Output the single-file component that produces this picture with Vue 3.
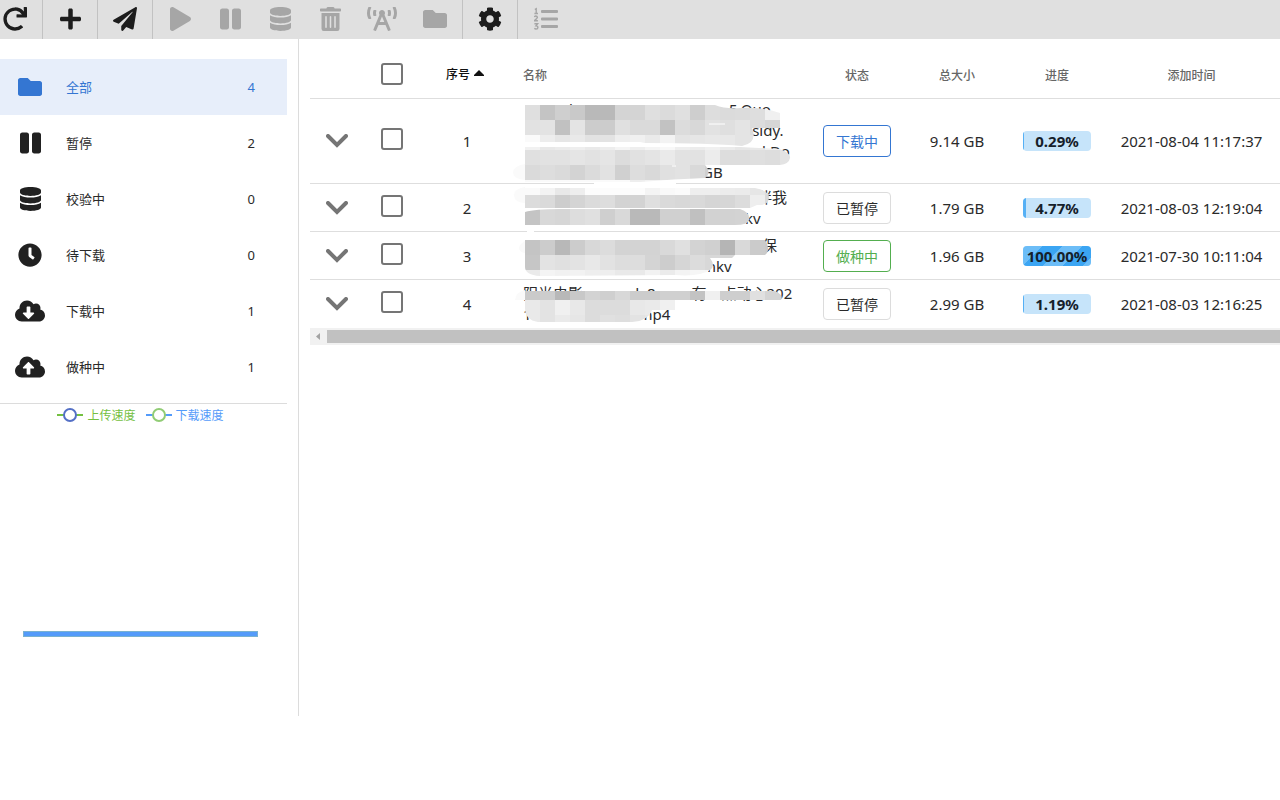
<script setup>
import { ref } from 'vue'

const icons = {
  redo: [512, 'M500.33 0h-47.41a12 12 0 0 0-12 12.57l4 82.76A247.42 247.42 0 0 0 256 8C119.34 8 7.9 119.53 8 256.19 8.1 393.07 119.1 504 256 504a247.1 247.1 0 0 0 166.18-63.91 12 12 0 0 0 .48-17.43l-34-34a12 12 0 0 0-16.38-.55A176 176 0 1 1 402.1 157.8l-101.53-4.87a12 12 0 0 0-12.57 12v47.41a12 12 0 0 0 12 12h200.33a12 12 0 0 0 12-12V12a12 12 0 0 0-12-12z'],
  plus: [448, 'M416 208H272V64c0-17.67-14.33-32-32-32h-32c-17.67 0-32 14.33-32 32v144H32c-17.67 0-32 14.33-32 32v32c0 17.67 14.33 32 32 32h144v144c0 17.67 14.33 32 32 32h32c17.67 0 32-14.33 32-32V304h144c17.67 0 32-14.33 32-32v-32c0-17.67-14.33-32-32-32z'],
  plane: [512, 'M476 3.2L12.5 270.6c-18.1 10.4-15.8 35.6 2.2 43.2L121 358.4l287.3-253.2c5.5-4.9 13.3 2.6 8.6 8.3L176 407v80.5c0 23.6 28.5 32.9 42.5 15.8L282 426l124.6 52.2c14.2 6 30.4-2.9 33-18.2l72-432C515 7.8 493.3-6.8 476 3.2z'],
  play: [448, 'M424.4 214.7L72.4 6.6C43.8-10.3 0 6.1 0 47.9V464c0 37.5 40.7 60.1 72.4 41.3l352-208c31.4-18.5 31.5-64.1 0-82.6z'],
  pause: [448, 'M144 479H48c-26.5 0-48-21.5-48-48V79c0-26.5 21.5-48 48-48h96c26.5 0 48 21.5 48 48v352c0 26.5-21.5 48-48 48zm304-48V79c0-26.5-21.5-48-48-48h-96c-26.5 0-48 21.5-48 48v352c0 26.5 21.5 48 48 48h96c26.5 0 48-21.5 48-48z'],
  database: [448, 'M448 73.143v45.714C448 159.143 347.667 192 224 192S0 159.143 0 118.857V73.143C0 32.857 100.333 0 224 0s224 32.857 224 73.143zM448 176v102.857C448 319.143 347.667 352 224 352S0 319.143 0 278.857V176c48.125 33.143 136.208 48.572 224 48.572S399.874 209.143 448 176zm0 160v102.857C448 479.143 347.667 512 224 512S0 479.143 0 438.857V336c48.125 33.143 136.208 48.572 224 48.572S399.874 369.143 448 336z'],
  trash: [448, 'M32 464a48 48 0 0 0 48 48h288a48 48 0 0 0 48-48V128H32zm272-256a16 16 0 0 1 32 0v224a16 16 0 0 1-32 0zm-96 0a16 16 0 0 1 32 0v224a16 16 0 0 1-32 0zm-96 0a16 16 0 0 1 32 0v224a16 16 0 0 1-32 0zM432 32H312l-9.4-18.7A24 24 0 0 0 281.1 0H166.8a23.72 23.72 0 0 0-21.4 13.3L136 32H16A16 16 0 0 0 0 48v32a16 16 0 0 0 16 16h416a16 16 0 0 0 16-16V48a16 16 0 0 0-16-16z'],
  tower: [640, 'M150.94 192h33.73c11.01 0 18.61-10.83 14.86-21.18-4.93-13.58-7.55-27.98-7.55-42.82s2.62-29.24 7.55-42.82C203.29 74.83 195.68 64 184.67 64h-33.73c-7.01 0-13.46 4.49-15.41 11.23C130.64 92.21 128 109.88 128 128c0 18.12 2.64 35.79 7.54 52.76 1.94 6.74 8.39 11.24 15.4 11.24zM89.92 23.34C95.56 12.72 87.97 0 75.96 0H40.63c-6.27 0-12.14 3.59-14.74 9.31C9.4 45.54 0 85.65 0 128c0 24.75 3.12 68.33 26.69 118.86 2.62 5.63 8.42 9.14 14.61 9.14h34.84c12.02 0 19.61-12.74 13.95-23.37-49.78-93.32-16.71-178.15-.17-209.29zM614.06 9.29C611.46 3.58 605.6 0 599.33 0h-35.42c-11.98 0-19.66 12.66-14.02 23.25 18.27 34.29 48.42 119.42.28 209.23-5.72 10.68 1.8 23.52 13.91 23.52h35.23c6.27 0 12.13-3.58 14.73-9.29C630.57 210.48 640 170.36 640 128s-9.42-82.48-25.94-118.71zM489.06 64h-33.73c-11.01 0-18.61 10.83-14.86 21.18 4.93 13.58 7.55 27.98 7.55 42.82s-2.62 29.24-7.55 42.82c-3.76 10.35 3.85 21.18 14.86 21.18h33.73c7.02 0 13.46-4.49 15.41-11.24 4.9-16.97 7.53-34.64 7.53-52.76 0-18.12-2.64-35.79-7.54-52.76-1.94-6.75-8.39-11.24-15.4-11.24zm-116.3 100.12c7.05-10.29 11.2-22.71 11.2-36.12 0-35.35-28.63-64-63.96-64-35.32 0-63.96 28.65-63.96 64 0 13.41 4.15 25.83 11.2 36.12l-130.5 313.41c-3.4 8.15.46 17.52 8.61 20.92l29.51 12.31c8.15 3.4 17.52-.46 20.91-8.61L244.96 384h150.07l49.2 118.15c3.4 8.16 12.76 12.01 20.91 8.61l29.51-12.31c8.15-3.4 12-12.77 8.61-20.92l-130.5-313.41zM271.62 320L320 203.81 368.38 320h-96.76z'],
  folder: [512, 'M464 128H272l-64-64H48C21.49 64 0 85.49 0 112v288c0 26.51 21.49 48 48 48h416c26.51 0 48-21.49 48-48V176c0-26.51-21.49-48-48-48z'],
  cog: [512, 'M487.4 315.7l-42.6-24.6c4.3-23.2 4.3-47 0-70.2l42.6-24.6c4.9-2.8 7.1-8.6 5.5-14-11.1-35.6-30-67.8-54.7-94.6-3.8-4.1-10-5.1-14.8-2.3L380.8 110c-17.9-15.4-38.5-27.3-60.8-35.1V25.8c0-5.6-3.9-10.5-9.4-11.7-36.7-8.2-74.3-7.8-109.2 0-5.5 1.2-9.4 6.1-9.4 11.7V75c-22.2 7.9-42.8 19.8-60.8 35.1L88.7 85.5c-4.9-2.8-11-1.9-14.8 2.3-24.7 26.7-43.6 58.9-54.7 94.6-1.7 5.4.6 11.2 5.5 14L67.3 221c-4.3 23.2-4.3 47 0 70.2l-42.6 24.6c-4.9 2.8-7.1 8.6-5.5 14 11.1 35.6 30 67.8 54.7 94.6 3.8 4.1 10 5.1 14.8 2.3l42.6-24.6c17.9 15.4 38.5 27.3 60.8 35.1v49.2c0 5.6 3.9 10.5 9.4 11.7 36.7 8.2 74.3 7.8 109.2 0 5.5-1.2 9.4-6.1 9.4-11.7v-49.2c22.2-7.9 42.8-19.8 60.8-35.1l42.6 24.6c4.9 2.8 11 1.9 14.8-2.3 24.7-26.7 43.6-58.9 54.7-94.6 1.5-5.5-.7-11.3-5.6-14.1zM256 336c-44.1 0-80-35.9-80-80s35.9-80 80-80 80 35.9 80 80-35.9 80-80 80z'],
  clock: [512, 'M256,8C119,8,8,119,8,256S119,504,256,504,504,393,504,256,393,8,256,8Zm92.49,313h0l-20,25a16,16,0,0,1-22.49,2.5h0l-67-49.72a40,40,0,0,1-15-31.23V112a16,16,0,0,1,16-16h32a16,16,0,0,1,16,16V256l58,42.5A16,16,0,0,1,348.49,321Z'],
  down: [640, 'M537.6 226.6c4.1-10.7 6.4-22.4 6.4-34.6 0-53-43-96-96-96-19.7 0-38.1 6-53.3 16.2C367 64.2 315.3 32 256 32c-88.4 0-160 71.6-160 160 0 2.7.1 5.4.2 8.1C40.2 219.8 0 273.2 0 336c0 79.5 64.5 144 144 144h368c70.7 0 128-57.3 128-128 0-61.9-44-113.6-102.4-125.4zm-132.9 88.7L299.3 420.7c-6.2 6.2-16.4 6.2-22.6 0L171.3 315.3c-10.1-10.1-2.9-27.3 11.3-27.3H248V176c0-8.8 7.2-16 16-16h48c8.8 0 16 7.2 16 16v112h65.4c14.2 0 21.4 17.2 11.3 27.3z'],
  up: [640, 'M537.6 226.6c4.1-10.7 6.4-22.4 6.4-34.6 0-53-43-96-96-96-19.7 0-38.1 6-53.3 16.2C367 64.2 315.3 32 256 32c-88.4 0-160 71.6-160 160 0 2.7.1 5.4.2 8.1C40.2 219.8 0 273.2 0 336c0 79.5 64.5 144 144 144h368c70.7 0 128-57.3 128-128 0-61.9-44-113.6-102.4-125.4zM393.4 288H328v112c0 8.8-7.2 16-16 16h-48c-8.8 0-16-7.2-16-16V288h-65.4c-14.3 0-21.4-17.2-11.3-27.3l105.4-105.4c6.2-6.2 16.4-6.2 22.6 0l105.4 105.4c10.1 10.1 2.9 27.3-11.3 27.3z'],
}

const actions = [
  ['play', '开始'], ['pause', '暂停'], ['database', '校验'],
  ['trash', '删除'], ['tower', '汇报'], ['folder', '目录'],
]

const active = ref('全部')
const filters = [
  { name: '全部', count: 4, icon: 'folder' },
  { name: '暂停', count: 2, icon: 'pause' },
  { name: '校验中', count: 0, icon: 'database' },
  { name: '待下载', count: 0, icon: 'clock' },
  { name: '下载中', count: 1, icon: 'down' },
  { name: '做种中', count: 1, icon: 'up' },
]

// Each name line is a list of [gap before, text] pieces left readable around the mosaic.
const rows = [
  { id: 1, status: '下载中', kind: 'blue', size: '9.14 GB', pct: 0.29, time: '2021-08-04 11:17:37',
    lines: [[[46, 'l'], [156, '5.Quo']], [[222, 'ssidy.']], [[239, 'l.Do']], [[179, 'GB']]] },
  { id: 2, status: '已暂停', kind: 'plain', size: '1.79 GB', pct: 4.77, time: '2021-08-03 12:19:04',
    lines: [[[234, '伴我']], [[208, 'mkv']]] },
  { id: 3, status: '做种中', kind: 'green', size: '1.96 GB', pct: 100, time: '2021-07-30 10:11:04',
    lines: [[[239, '保']], [[179, 'mkv']]] },
  { id: 4, status: '已暂停', kind: 'plain', size: '2.99 GB', pct: 1.19, time: '2021-08-03 12:16:25',
    lines: [[[0, '阳光电影'], [47, 'dy8'], [36, '有一点动'], [0, '心'], [0, '202']], [[0, '1'], [107, 'mp4']]] },
]

// Grey blocks, 15px wide, starting at x = 15 of the overlay.
const strips = [
  { clip: 'M15 10H205Q215 14 230 13Q255 12 270 18V33H242Q248 48 232 51Q200 48 135 48L130 47H15Z',
    bands: [
      [10, 15, 'df c4 cf c9 b9 b9 d4 d4 df db e0 ce dd db dc de f0'],
      [25, 15, 'e2 e3 c1 e4 cc cc e0 da da c2 dc d8 e2 df e4 dc d6'],
      [40, 11, 'fa ed e6 e9 e2 e3 ee f0 ea f3 e4 e6 e8 e8 e4 e4'],
    ] },
  { clip: 'M15 52H230L270 54Q281 58 280 63Q279 69 270 70H195Q202 78 195 83Q165 84 130 87H15Z',
    bands: [
      [52, 3, 'f1 e8 eb ee e9 ed f4 ee f4 f8 ee ec f0 eb e6 e8 ef f2'],
      [55, 15, 'e0 e2 e2 e5 e2 e5 dc e1 e4 ea e2 e2 ec dd dd df dd e3'],
      [70, 15, 'da dd da d3 db e2 d0 dd d9 e0 e2 d9 cf'],
      [85, 2, 'fa fa fa fa fa fa fa ee f2 f2 fa fa'],
    ] },
  { clip: 'M15 93H245Q260 96 259 103Q258 111 247 110L240 113H15ZM15 117Q25 114 50 114H230Q241 118 239 125Q238 130 225 130H15Z',
    bands: [
      [93, 7, 'fa f3 e8 ee fc fc fc fc f4 f9 fb ee ee ec eb e6 dd'],
      [100, 13, 'dc da cd d4 db dd d3 d3 df da d8 d9 d5 d6 dc ee d9'],
      [114, 16, 'c4 d8 d6 dd e0 cf d9 b9 b9 d0 d0 c0 d2 d2 d3'],
    ] },
  { clip: 'M15 145H255Q260 152 257 158L255 160H225L222 163H200Q206 171 200 175Q190 182 165 180L30 181Q15 180 15 172Z',
    bands: [
      [145, 15, 'c4 cc b8 cc d8 dc d3 d3 d3 d9 e0 d3 d0 b5 d9 cb c9'],
      [160, 15, 'c6 e3 e0 e3 e8 e2 dd dd d4 cd d6 dc d8 d6'],
      [175, 7, 'ea f4 f1 f2 ee ee e9 e9 f2 eb f3 f6 f5'],
    ] },
  { clip: 'M15 196H265Q274 200 271 205H165V215H142Q138 226 122 227H28Q15 225 15 213Z',
    bands: [
      [196, 9, 'ca cd b8 c8 d3 cf d8 cc cc d0 d0 c3 f0 ce ce e0 d4 d4'],
      [205, 15, 'e9 e3 f0 e8 dc dc dc e8 ea f0'],
      [220, 7, 'e9 e3 ea e6 dc e0 de e3 e5'],
    ] },
].map((s) => ({
  clip: s.clip,
  cells: s.bands.flatMap(([y, h, tones]) =>
    tones.split(' ').map((t, i) => ({ x: 15 + i * 15, y, h, fill: '#' + t.repeat(3) }))),
}))
</script>

<template>
  <div class="app">
    <header class="toolbar">
      <button class="tool first" aria-label="刷新"><svg class="icon" :viewBox="`0 0 ${icons.redo[0]} 512`"><path :d="icons.redo[1]" /></svg></button>
      <button class="tool" aria-label="添加"><svg class="icon" :viewBox="`0 0 ${icons.plus[0]} 512`"><path :d="icons.plus[1]" /></svg></button>
      <button class="tool" aria-label="发送"><svg class="icon" :viewBox="`0 0 ${icons.plane[0]} 512`"><path :d="icons.plane[1]" /></svg></button>
      <div class="group">
        <button v-for="[name, label] in actions" :key="name" class="action" :class="name" :aria-label="label" disabled>
          <svg class="icon" :viewBox="`0 0 ${icons[name][0]} 512`"><path :d="icons[name][1]" /></svg>
        </button>
      </div>
      <button class="tool" aria-label="设置"><svg class="icon" :viewBox="`0 0 ${icons.cog[0]} 512`"><path :d="icons.cog[1]" /></svg></button>
      <button class="tool last" aria-label="列表" disabled>
        <svg class="icon" viewBox="0 0 24 24">
          <path d="M8 3h15q1 0 1 1v1q0 1-1 1H8q-1 0-1-1V4q0-1 1-1zM8 10.500h15q1 0 1 1v1q0 1-1 1H8q-1 0-1-1v-1q0-1 1-1zM8 18h15q1 0 1 1v1q0 1-1 1H8q-1 0-1-1v-1q0-1 1-1z" />
          <path class="digits" d="M.8 2.500l1.400-.8v4.600M.4 6.500h3.600M.4 10q.3-1 1.500-1t1.500 1.200q0 .8-3 3.500h3.500M.4 16.800h3.200l-1.600 2q1.900 0 1.900 1.600t-1.900 1.600q-1 0-1.700-.6" />
        </svg>
      </button>
    </header>

    <div class="body">
      <aside class="side">
        <nav class="filters">
          <button v-for="f in filters" :key="f.name" class="filter" :class="{ on: f.name === active }" @click="active = f.name">
            <span class="pic"><svg class="icon" :viewBox="`0 0 ${icons[f.icon][0]} 512`"><path :d="icons[f.icon][1]" /></svg></span>
            <span class="label">{{ f.name }}</span>
            <span class="count">{{ f.count }}</span>
          </button>
        </nav>
        <div class="legend">
          <span class="key up">
            <svg width="26" height="14" viewBox="0 0 26 14"><path d="M0 7H26" stroke="#74c041" stroke-width="2" /><circle cx="13" cy="7" r="6" fill="#fff" stroke="#5470c6" stroke-width="2" /></svg>上传速度
          </span>
          <span class="key down">
            <svg width="26" height="14" viewBox="0 0 26 14"><path d="M0 7H26" stroke="#549bfa" stroke-width="2" /><circle cx="13" cy="7" r="6" fill="#fff" stroke="#91cc75" stroke-width="2" /></svg>下载速度
          </span>
        </div>
        <div class="chart"><div class="series"></div></div>
      </aside>

      <main class="main">
        <div class="sheet">
          <table>
            <colgroup><col class="c-exp"><col class="c-chk"><col class="c-no"><col class="c-name"><col class="c-mid"><col class="c-mid"><col class="c-mid"><col></colgroup>
            <thead>
              <tr>
                <th></th>
                <th class="chk"><input type="checkbox" aria-label="全选"></th>
                <th class="sorted">序号<svg width="10" height="6" viewBox="0 0 10 6"><path d="M5 0L10 5V6H0V5Z" fill="#111" /></svg></th>
                <th class="name">名称</th>
                <th>状态</th>
                <th>总大小</th>
                <th>进度</th>
                <th class="time">添加时间</th>
              </tr>
            </thead>
            <tbody>
              <tr v-for="r in rows" :key="r.id">
                <td><button class="expand" aria-label="展开"><svg width="22" height="14" viewBox="0 0 22 14"><path d="M2 2L11 11L20 2" /></svg></button></td>
                <td class="chk"><input type="checkbox" :aria-label="`选择 ${r.id}`"></td>
                <td>{{ r.id }}</td>
                <td class="name">
                  <div v-for="(line, i) in r.lines" :key="i" class="line">
                    <span v-for="(seg, j) in line" :key="j" :style="{ marginLeft: seg[0] + 'px' }">{{ seg[1] }}</span>
                  </div>
                </td>
                <td><button class="status" :class="r.kind">{{ r.status }}</button></td>
                <td>{{ r.size }}</td>
                <td>
                  <div class="bar">
                    <div class="fill" :class="{ full: r.pct === 100 }" :style="{ width: r.pct + '%' }"></div>
                    <strong>{{ r.pct.toFixed(2) }}%</strong>
                  </div>
                </td>
                <td class="time">{{ r.time }}</td>
              </tr>
            </tbody>
          </table>
          <svg class="mosaic" width="300" height="235" viewBox="0 0 300 235" aria-hidden="true">
            <defs>
              <clipPath v-for="(s, i) in strips" :id="`strip${i}`" :key="i"><path :d="s.clip" /></clipPath>
            </defs>
            <path d="M15 69Q3 71 3 78Q4 84 15 85ZM15 92Q3 94 4 101Q5 108 15 108ZM15 146Q9 149 9 154Q11 158 15 158ZM15 195Q6 197 5 205H15Z" fill="#fafafa" />
            <path d="M84 87H166V91H84ZM17 134H24V138H17Z" fill="#fff" />
            <g v-for="(s, i) in strips" :key="i" :clip-path="`url(#strip${i})`" shape-rendering="crispEdges">
              <rect v-for="(c, j) in s.cells" :key="j" :x="c.x" :y="c.y" width="15" :height="c.h" :fill="c.fill" />
            </g>
            <path d="M199 29H215M162 71H166" stroke="#fff" />
          </svg>
        </div>
        <div class="scroll"><svg width="17" height="17" viewBox="0 0 17 17"><path d="M10 5V12L6 8.500Z" fill="#a3a3a3" /></svg><div class="thumb"></div></div>
      </main>
    </div>
  </div>
</template>

<style>
body { background: #fff; }
</style>

<style scoped>
.app { font-family: "Noto Sans", "Noto Sans CJK SC", sans-serif; font-size: 15px; color: #2a2a2a; overflow: hidden; }
button { font: inherit; color: inherit; background: none; border: 0; padding: 0; margin: 0; cursor: pointer; }
.icon { display: block; height: 24px; fill: currentColor; }
.toolbar { display: flex; height: 39px; background: #e0e0e0; }
.toolbar button { display: flex; align-items: center; justify-content: center; padding-bottom: 1px; color: #1d1d1d; }
.toolbar button:disabled { color: #a6a6a6; cursor: default; }
.toolbar .tool { width: 55px; border-right: 1px solid #c2c2c2; }
.toolbar .first { width: 43px; justify-content: flex-start; padding-left: 3px; }
.toolbar .last { border: 0; }
.group { display: flex; padding: 0 1px 0 2px; border-right: 1px solid #c2c2c2; }
.action { width: 50px; }
.group .tower { width: 54px; }
.group .folder { width: 52px; }
.digits { fill: none; stroke: currentColor; stroke-width: 1.4; }

.body { display: flex; align-items: flex-start; }
.side { flex: 0 0 298px; padding-top: 20px; border-right: 1px solid #dcdcdc; }
.filters { display: flex; flex-direction: column; margin-right: 11px; padding-bottom: 8px; border-bottom: 1px solid #dcdcdc; }
.filter { display: flex; align-items: center; height: 56px; padding: 0 32px 0 12px; font-size: 13px; text-align: left; }
.filter .icon { color: #212121; }
.filter.on { background: #e7eefa; color: #3476d2; }
.filter.on .icon { color: #3476d2; }
.pic { display: flex; justify-content: center; width: 36px; }
.label { flex: 1; padding: 0 0 2px 18px; }
.legend { display: flex; gap: 10px; justify-content: center; margin-right: 17px; height: 22px; font-size: 12px; }
.key { display: flex; align-items: center; gap: 4px; }
.key.up { color: #74c041; }
.key.down { color: #549bfa; }
.chart { display: flex; flex-direction: column; justify-content: flex-end; height: 211px; padding: 0 40px 79px 23px; }
.series { height: 4px; background: #549bfa; border: 1px solid #79b1d0; }

.main { flex: 1; min-width: 0; padding: 11px 0 0 11px; }
.sheet { position: relative; }
table { width: 100%; table-layout: fixed; border-spacing: 0; }
.c-exp { width: 54px; }
.c-chk { width: 63px; }
.c-no { width: 80px; }
.c-name { width: 300px; }
.c-mid { width: 100px; }
th, td { padding: 0; text-align: center; vertical-align: middle; border-bottom: 1px solid #dedede; }
th { height: 46px; padding-top: 2px; font-size: 12px; font-weight: 500; color: #666; }
th.chk, th.sorted { height: 48px; padding-top: 0; }
th.sorted { padding-right: 4px; color: #111; }
.sorted svg { margin: 0 0 3px 4px; }
td { height: 47px; }
tbody tr:last-child td { height: 48px; border-bottom: 0; }
.chk { padding-left: 17px; text-align: left; }
.chk input { display: block; appearance: none; width: 22px; height: 22px; margin: 0; border: 2px solid #757575; border-radius: 3px; }
td.chk input { margin-bottom: 4px; }
.name { padding-left: 16px; text-align: left; }
.time { padding-right: 4px; }
.line { display: flex; height: 21px; line-height: 21px; white-space: nowrap; }
.expand { display: block; margin: 0 auto; }
.expand svg { display: block; fill: none; stroke: #757575; stroke-width: 4; stroke-linecap: round; }
.status { width: 68px; height: 32px; border: 1px solid #dcdcdc; border-radius: 4px; font-size: 14px; }
.status.blue { color: #3476d2; border-color: #3476d2; }
.status.green { color: #53ae4f; border-color: #53ae4f; }
.bar { position: relative; height: 20px; margin: 0 16px; border-radius: 4px; overflow: hidden; background: #c6e4fa; line-height: 20px; }
.fill { position: absolute; inset: 0 auto 0 0; min-width: 1px; background: #55b0f5; }
.fill.full { background: repeating-linear-gradient(135deg, #6cbdf7 0 14px, #3ba5f3 14px 28px); }
.bar strong { position: relative; color: #15202a; }
.mosaic { position: absolute; left: 200px; top: 45px; pointer-events: none; }
.scroll { display: flex; align-items: center; height: 17px; background: #f1f1f1; }
.thumb { flex: 1; height: 13px; background: #c1c1c1; }
</style>
